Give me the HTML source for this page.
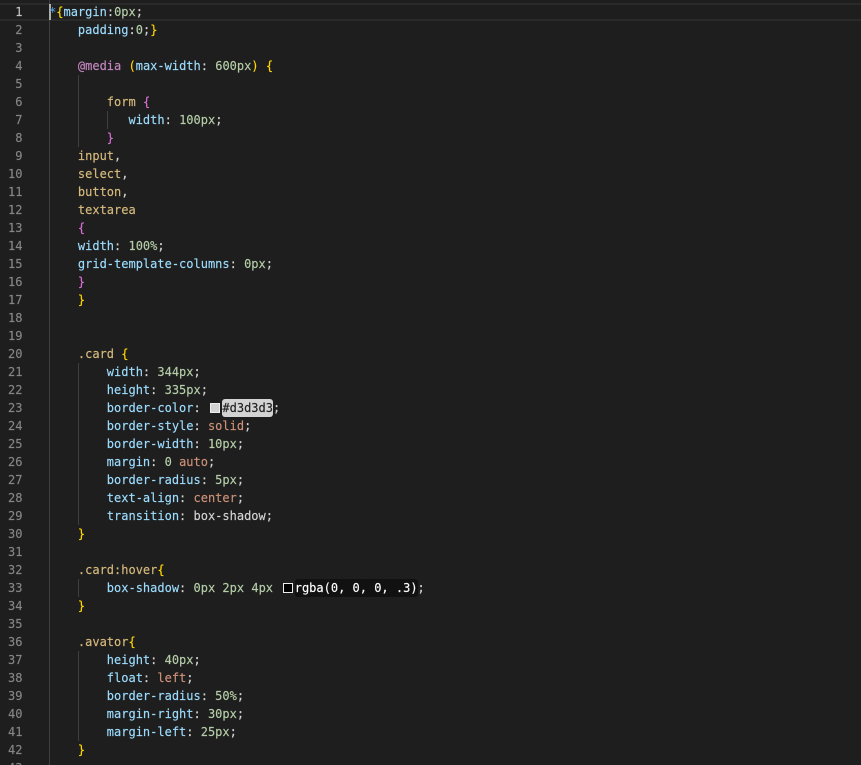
<!DOCTYPE html>
<html>
<head>
<meta charset="utf-8">
<style>
html,body{margin:0;padding:0;background:#1e1e1e;width:861px;height:765px;overflow:hidden;}
#w{position:absolute;left:0;top:0;width:861px;height:765px;overflow:hidden;background:#1e1e1e;font-family:"DejaVu Sans Mono","Liberation Mono",monospace;font-size:12px;-webkit-text-stroke:0.15px;}
.hl{position:absolute;left:0;width:861px;height:2px;background:#2a2a2a;}
.g{position:absolute;width:1px;background:#404040;}
.n{position:absolute;left:0;width:22.5px;text-align:right;height:18px;line-height:18px;color:#858585;white-space:pre;}
.l{position:absolute;left:49px;height:18px;line-height:18px;color:#d4d4d4;white-space:pre;}
.p{color:#9cdcfe}.v{color:#b5cea8}.s{color:#ce9178}.t{color:#d7ba7d}.y{color:#ffd700}.k{color:#da70d6}.m{color:#c586c0}.a{color:#569cd6}
.sw{position:absolute;box-sizing:border-box;width:10px;height:10px;border:1px solid #eee;}
.box{position:absolute;height:18px;border-radius:3px;}
</style>
</head>
<body>
<div id="w">
<div class="hl" style="top:3px"></div>
<div class="hl" style="top:19px"></div>
<div class="g" style="left:49px;top:0;height:765px"></div>
<div class="g" style="left:78px;top:75px;height:72px"></div>
<div class="g" style="left:107px;top:111px;height:18px"></div>
<div class="g" style="left:78px;top:363px;height:162px"></div>
<div class="g" style="left:78px;top:579px;height:18px"></div>
<div class="g" style="left:78px;top:651px;height:90px"></div>
<div style="position:absolute;left:49px;top:4px;width:2px;height:16px;background:#aeafad"></div>
<div class="box" style="left:222px;top:399px;width:51px;background:#d3d3d3"></div>
<div class="sw" style="left:210px;top:403px;background:#d3d3d3"></div>
<div class="box" style="left:295px;top:579px;width:123px;background:#111"></div>
<div class="sw" style="left:283px;top:583px;background:#000"></div>

<div class="n" style="top:3px;color:#c6c6c6">1</div>
<div class="n" style="top:21px">2</div>
<div class="n" style="top:39px">3</div>
<div class="n" style="top:57px">4</div>
<div class="n" style="top:75px">5</div>
<div class="n" style="top:93px">6</div>
<div class="n" style="top:111px">7</div>
<div class="n" style="top:129px">8</div>
<div class="n" style="top:147px">9</div>
<div class="n" style="top:165px">10</div>
<div class="n" style="top:183px">11</div>
<div class="n" style="top:201px">12</div>
<div class="n" style="top:219px">13</div>
<div class="n" style="top:237px">14</div>
<div class="n" style="top:255px">15</div>
<div class="n" style="top:273px">16</div>
<div class="n" style="top:291px">17</div>
<div class="n" style="top:309px">18</div>
<div class="n" style="top:327px">19</div>
<div class="n" style="top:345px">20</div>
<div class="n" style="top:363px">21</div>
<div class="n" style="top:381px">22</div>
<div class="n" style="top:399px">23</div>
<div class="n" style="top:417px">24</div>
<div class="n" style="top:435px">25</div>
<div class="n" style="top:453px">26</div>
<div class="n" style="top:471px">27</div>
<div class="n" style="top:489px">28</div>
<div class="n" style="top:507px">29</div>
<div class="n" style="top:525px">30</div>
<div class="n" style="top:543px">31</div>
<div class="n" style="top:561px">32</div>
<div class="n" style="top:579px">33</div>
<div class="n" style="top:597px">34</div>
<div class="n" style="top:615px">35</div>
<div class="n" style="top:633px">36</div>
<div class="n" style="top:651px">37</div>
<div class="n" style="top:669px">38</div>
<div class="n" style="top:687px">39</div>
<div class="n" style="top:705px">40</div>
<div class="n" style="top:723px">41</div>
<div class="n" style="top:741px">42</div>
<div class="n" style="top:759px">43</div>

<div class="l" style="top:3px"><span class="a">*</span><span class="y">{</span><span class="p">margin</span>:<span class="v">0px</span>;</div>
<div class="l" style="top:21px">    <span class="p">padding</span>:<span class="v">0</span>;<span class="y">}</span></div>
<div class="l" style="top:57px">    <span class="m">@media</span> <span class="y">(</span><span class="p">max-width</span>: <span class="v">600px</span><span class="y">)</span> <span class="y">{</span></div>
<div class="l" style="top:93px">        <span class="t">form</span> <span class="k">{</span></div>
<div class="l" style="top:111px">           <span class="p">width</span>: <span class="v">100px</span>;</div>
<div class="l" style="top:129px">        <span class="k">}</span></div>
<div class="l" style="top:147px">    <span class="t">input</span>,</div>
<div class="l" style="top:165px">    <span class="t">select</span>,</div>
<div class="l" style="top:183px">    <span class="t">button</span>,</div>
<div class="l" style="top:201px">    <span class="t">textarea</span></div>
<div class="l" style="top:219px">    <span class="k">{</span></div>
<div class="l" style="top:237px">    <span class="p">width</span>: <span class="v">100%</span>;</div>
<div class="l" style="top:255px">    <span class="p">grid-template-columns</span>: <span class="v">0px</span>;</div>
<div class="l" style="top:273px">    <span class="k">}</span></div>
<div class="l" style="top:291px">    <span class="y">}</span></div>
<div class="l" style="top:345px">    <span class="t">.card</span> <span class="y">{</span></div>
<div class="l" style="top:363px">        <span class="p">width</span>: <span class="v">344px</span>;</div>
<div class="l" style="top:381px">        <span class="p">height</span>: <span class="v">335px</span>;</div>
<div class="l" style="top:399px">        <span class="p">border-color</span>:   <span style="color:#1e1e1e">#d3d3d3</span>;</div>
<div class="l" style="top:417px">        <span class="p">border-style</span>: <span class="s">solid</span>;</div>
<div class="l" style="top:435px">        <span class="p">border-width</span>: <span class="v">10px</span>;</div>
<div class="l" style="top:453px">        <span class="p">margin</span>: <span class="v">0</span> <span class="s">auto</span>;</div>
<div class="l" style="top:471px">        <span class="p">border-radius</span>: <span class="v">5px</span>;</div>
<div class="l" style="top:489px">        <span class="p">text-align</span>: <span class="s">center</span>;</div>
<div class="l" style="top:507px">        <span class="p">transition</span>: box-shadow;</div>
<div class="l" style="top:525px">    <span class="y">}</span></div>
<div class="l" style="top:561px">    <span class="t">.card:hover</span><span class="y">{</span></div>
<div class="l" style="top:579px">        <span class="p">box-shadow</span>: <span class="v">0px</span> <span class="v">2px</span> <span class="v">4px</span>   <span style="color:#fff">rgba(0, 0, 0, .3)</span>;</div>
<div class="l" style="top:597px">    <span class="y">}</span></div>
<div class="l" style="top:633px">    <span class="t">.avator</span><span class="y">{</span></div>
<div class="l" style="top:651px">        <span class="p">height</span>: <span class="v">40px</span>;</div>
<div class="l" style="top:669px">        <span class="p">float</span>: <span class="s">left</span>;</div>
<div class="l" style="top:687px">        <span class="p">border-radius</span>: <span class="v">50%</span>;</div>
<div class="l" style="top:705px">        <span class="p">margin-right</span>: <span class="v">30px</span>;</div>
<div class="l" style="top:723px">        <span class="p">margin-left</span>: <span class="v">25px</span>;</div>
<div class="l" style="top:741px">    <span class="y">}</span></div>
</div>
</body>
</html>
